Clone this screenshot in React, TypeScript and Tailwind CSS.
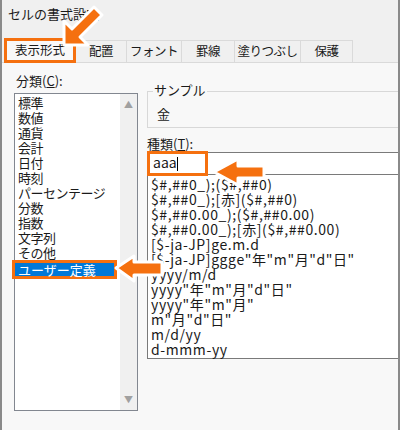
export default function App() {
  const cats = ["標準","数値","通貨","会計","日付","時刻","パーセンテージ","分数","指数","文字列","その他"];
  const fmts = ['$#,##0_);($#,##0)','$#,##0_);[赤]($#,##0)','$#,##0.00_);($#,##0.00)','$#,##0.00_);[赤]($#,##0.00)','[$-ja-JP]ge.m.d','[$-ja-JP]ggge"年"m"月"d"日"','yyyy/m/d','yyyy"年"m"月"d"日"','yyyy"年"m"月"','m"月"d"日"','m/d/yy','d-mmm-yy'];
  const tabs = ["配置","フォント","罫線","塗りつぶし","保護"];
  const tw = ["w-[51px]","w-[55px]","w-[53px]","w-[66px]","w-[52px]"];
  return (
    <div className="relative w-[400px] h-[430px] overflow-hidden bg-[#f8f8f8] text-[13px] text-[#1a1a1a] border-x-2 border-[#8a8a8a]" style={{fontFamily:'"Noto Sans CJK JP", sans-serif'}}>
      <div className="h-[40px] bg-[#f0f0f0] pl-[6px] pt-[4px] text-[13px]">セルの書式設定</div>
      <div className="flex h-[23px] bg-[#f0f0f0] pl-[2px] border-b border-[#dadada] whitespace-nowrap text-[12.5px]">
        <div className="w-[72px] h-[25px] -mt-[2px] border-[3px] border-[#f5700f] bg-[#f8f8f8] flex items-center justify-center">表示形式</div>
        {tabs.map((t,i)=>(
          <div key={t} className={`${tw[i]} border-r border-t border-[#dadada] flex items-center justify-center tracking-[-0.5px]`}>{t}</div>
        ))}
      </div>
      <div className="flex pl-[12px] pt-[8px]">
        <div className="w-[124px]">
          <div className="h-[22px] pl-[2px]">分類(<u>C</u>):</div>
          <div className="flex w-[124px] h-[318px] border border-[#828790] bg-white">
            <div className="flex-1 pt-[1px] leading-[15px]">
              {cats.map(c=>(<div key={c} className="pl-[3px] h-[15px] tracking-[-0.5px]">{c}</div>))}
              <div className="relative h-[19px] -ml-[3px] w-[105px] border-[3px] border-[#f5700f]">
                <div className="bg-[#0078d7] text-white h-full pl-[3px] leading-[13px]">ユーザー定義</div>
              </div>
            </div>
            <div className="w-[17px] bg-[#f0f0f0] flex flex-col justify-between items-center py-[4px] text-[9px] text-[#a0a0a0]">
              <span>▲</span><span>▼</span>
            </div>
          </div>
        </div>
        <div className="ml-[9px] flex-1">
          <div className="mt-[20px] h-[37px] border border-[#d8d8d8] border-r-0 relative">
            <span className="absolute -top-[12px] left-[5px] bg-[#f8f8f8] px-[1px]">サンプル</span>
            <div className="pl-[9px] pt-[12px]">金</div>
          </div>
          <div className="mt-[6px] h-[18px]">種類(<u>T</u>):</div>
          <div className="relative h-[23px] bg-white border border-[#7a7a7a] border-r-0">
            <div className="absolute -left-[1px] -top-[2px] w-[61px] h-[25px] border-[3px] border-[#f5700f] pl-[3px] leading-[17px] text-[14px]">aaa<span className="inline-block w-px h-[14px] bg-black align-middle"></span></div>
          </div>
          <div className="h-[184px] bg-white border border-[#7a7a7a] border-t-0 border-r-0 pt-[2px] pl-[3px] leading-[15px] text-[14px] tracking-[0.6px]">
            {fmts.map(f=>(<div key={f} className="h-[15px] whitespace-nowrap">{f}</div>))}
          </div>
        </div>
      </div>
      <div className="pl-[16px] pt-[17px] whitespace-nowrap text-[12px]">基になる組み込みの表示形式を選択し、新しい表示形式を入力してください。</div>
      <svg className="absolute left-0 top-0" width="400" height="430">
        <g stroke="#fff" strokeWidth="3" strokeLinejoin="round">
          <polygon points="92,7 100,15 78,37 86,45 62,45 62,21 70,29" fill="#f5700f" />
          <polygon points="114,268 132,256 132,262 160,262 160,275 132,275 132,281" fill="#f5700f" />
          <polygon points="212,172 236,159 236,166 262,166 262,178 236,178 236,185" fill="#f5700f" />
        </g>
      </svg>
    </div>
  );
}
